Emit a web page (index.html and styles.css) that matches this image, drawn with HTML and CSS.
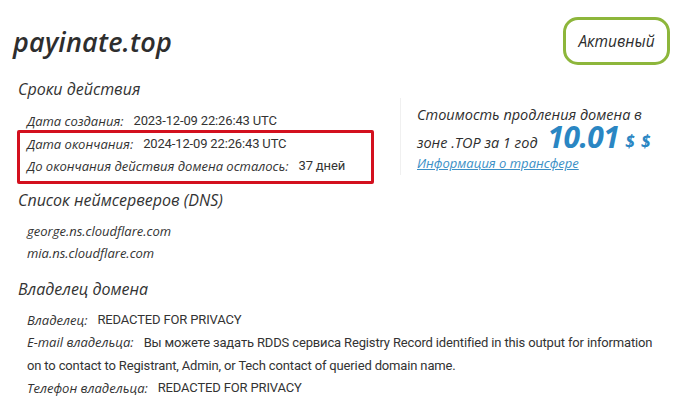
FILE: index.html
```html
<!DOCTYPE html>
<html lang="ru">
<head>
<meta charset="utf-8">
<title>payinate.top</title>
<link rel="stylesheet" href="styles.css">
</head>
<body>
<div class="page">
  <header class="header">
    <h1 class="domain">payinate.top</h1>
    <div class="badge">Активный</div>
  </header>

  <div class="top">
    <section class="terms">
      <h2 class="heading">Сроки действия</h2>
      <div class="row"><span class="label">Дата создания:</span><span class="value">2023-12-09 22:26:43 UTC</span></div>
      <div class="highlight">
        <div class="row"><span class="label">Дата окончания:</span><span class="value">2024-12-09 22:26:43 UTC</span></div>
        <div class="row"><span class="label">До окончания действия домена осталось:</span><span class="value">37 дней</span></div>
      </div>
    </section>
    <aside class="price">
      <div class="price-line first">Стоимость продления домена в</div>
      <div class="price-line second">зоне .TOP за 1 год <span class="amount">10.01</span><span class="currency">$ $</span></div>
      <a class="transfer" href="#">Информация о трансфере</a>
    </aside>
  </div>

  <section class="dns">
    <h2 class="heading">Список неймсерверов (DNS)</h2>
    <div class="ns">george.ns.cloudflare.com</div>
    <div class="ns">mia.ns.cloudflare.com</div>
  </section>

  <section class="owner">
    <h2 class="heading">Владелец домена</h2>
    <div class="row"><span class="label">Владелец:</span><span class="value">REDACTED FOR PRIVACY</span></div>
    <div class="row wrap"><span class="label">E-mail владельца:</span><span class="value">Вы можете задать RDDS сервиса Registry Record identified in this output for information<br>on to contact to Registrant, Admin, or Tech contact of queried domain name.</span></div>
    <div class="row"><span class="label">Телефон владельца:</span><span class="value">REDACTED FOR PRIVACY</span></div>
  </section>
</div>
</body>
</html>
```
FILE: styles.css
```css
html, body {
  margin: 0;
  padding: 0;
  background: #fff;
}
body {
  color: #333;
  font-family: "Open Sans", "Noto Sans", sans-serif;
}
.page {
  width: 691px;
  padding: 17px 0 0 0;
  box-sizing: border-box;
}
.header {
  display: flex;
  justify-content: space-between;
  align-items: center;
  padding: 0 21px 0 13px;
  height: 48px;
}
.domain {
  margin: 0;
  font-size: 27px;
  font-style: italic;
  font-weight: 600;
  color: #2e2e2e;
  letter-spacing: 0.2px;
}
.badge {
  box-sizing: border-box;
  height: 48px;
  width: 107px;
  border: 3px solid #8db63b;
  border-radius: 15px;
  display: flex;
  align-items: center;
  justify-content: center;
  font-style: italic;
  font-size: 15.5px;
  font-weight: 500;
  color: #2c2c2c;
}
.top {
  display: flex;
  margin-top: 13px;
}
.terms {
  width: 400px;
}
.heading {
  margin: 0 0 0 18px;
  font-size: 16px;
  line-height: 22px;
  font-style: italic;
  font-weight: 500;
  color: #333;
}
.terms .heading {
  margin-bottom: 10px;
}
.row {
  display: flex;
  padding-left: 27px;
  font-size: 13px;
  line-height: 22px;
  white-space: nowrap;
}
.label {
  font-style: italic;
  margin-right: 10px;
}
.value {
  font-family: "Roboto", "Liberation Sans", sans-serif;
  font-size: 13px;
  letter-spacing: -0.15px;
}
.highlight {
  margin: 0 0 0 17px;
  width: 357px;
  box-sizing: border-box;
  border: 3px solid #d3101e;
  border-radius: 2px;
  padding: 0 0 4px 0;
  margin-top: -2px;
}
.highlight .row {
  padding-left: 7px;
}
.price {
  margin-top: 20px;
  height: 77px;
  border-left: 1px solid #f0f0f0;
  padding-left: 16px;
  font-style: italic;
  font-size: 14.5px;
  font-weight: 500;
  color: #2e2e2e;
  display: flex;
  flex-direction: column;
}
.price-line {
  white-space: nowrap;
}
.price-line.first {
  margin-top: 8px;
  line-height: 17px;
}
.price-line.second {
  margin-top: 3px;
  line-height: 28px;
  display: flex;
  align-items: baseline;
}
.amount {
  font-size: 30px;
  font-weight: 700;
  color: #2a86c3;
  line-height: 22px;
  letter-spacing: -0.6px;
  margin-left: 10px;
}
.currency {
  font-size: 17px;
  font-weight: 700;
  color: #2a86c3;
  letter-spacing: 1px;
  margin-left: 6px;
}
.transfer {
  display: block;
  color: #3b8fc6;
  text-decoration: underline;
  font-size: 13px;
  line-height: 20px;
  margin-top: -4px;
}
.dns {
  margin-top: 5px;
}
.ns {
  padding-left: 27px;
  font-size: 13px;
  line-height: 22px;
  font-style: italic;
}
.dns .heading {
  margin-bottom: 9px;
}
.owner {
  margin-top: 14px;
}
.owner .heading {
  margin-bottom: 9px;
}
.row.wrap {
  display: block;
}
.row.wrap .label {
  margin-right: 10px;
}
```
